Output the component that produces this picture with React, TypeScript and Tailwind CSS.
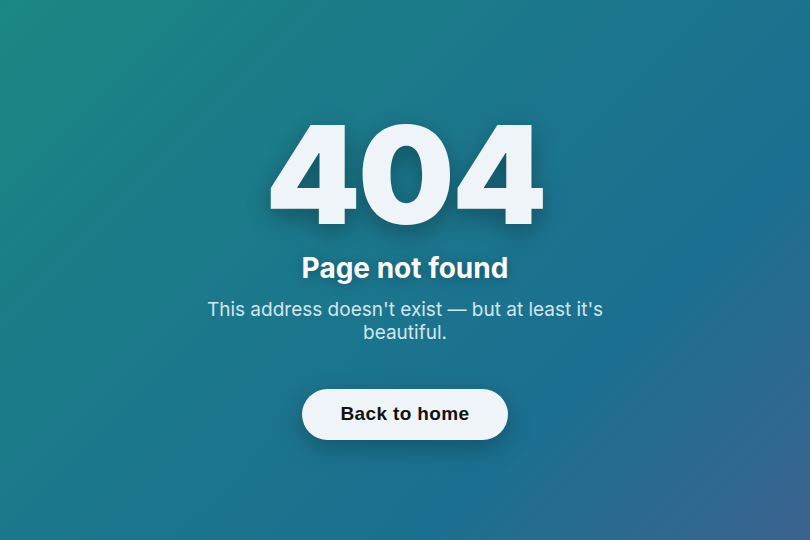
export default function App() {
  return (
    <div
      className="min-h-screen w-full flex flex-col items-center justify-center pt-[7px] text-center bg-[linear-gradient(135deg,#1c8782_0%,#1b788c_40%,#1b7090_70%,#3c6390_100%)]"
      style={{ fontFamily: "Inter, 'Noto Sans', sans-serif" }}
    >
      <h1 className="text-[136px] leading-none font-black tracking-[-0.02em] text-[#eef4f7] [text-shadow:0_8px_24px_rgba(0,0,0,0.3)]">
        404
      </h1>
      <h2 className="mt-[7px] text-[28px] leading-[36px] font-bold tracking-normal text-white [text-shadow:0_2px_12px_rgba(0,0,0,0.25)]">
        Page not found
      </h2>
      <p className="mt-[12px] max-w-md text-[19px] leading-[23px] text-[#d3e6ec]">
        This address doesn't exist — but at least it's beautiful.
      </p>
      <button
        className="mt-[45px] h-[51px] w-[206px] rounded-full bg-[#eef4f7] text-[19px] font-bold tracking-[0.02em] text-[#111] shadow-[0_8px_24px_rgba(0,0,0,0.25)]"
        style={{ fontFamily: "'Liberation Sans', Arial, sans-serif" }}
      >
        Back to home
      </button>
    </div>
  );
}
